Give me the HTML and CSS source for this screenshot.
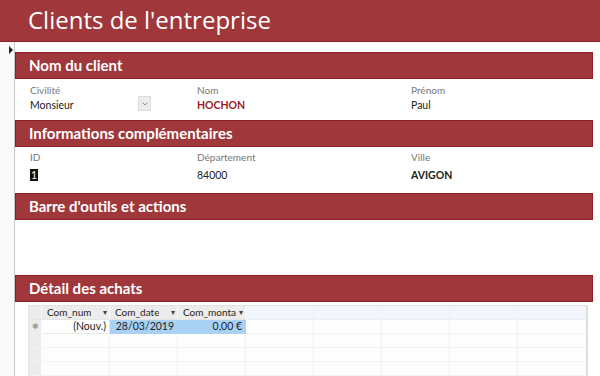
FILE: index.html
```html
<!DOCTYPE html>
<html lang="fr">
<head>
  <meta charset="UTF-8" />
  <title>Clients de l'entreprise</title>
  <link rel="stylesheet" href="styles.css">
</head>
<body>

  <!-- Form header -->
  <div class="title-bar">Clients de l'entreprise</div>

  <div class="main">
    <!-- Record selector -->
    <div class="selector"><span class="current"></span></div>

    <div class="form">
      <div class="section-bar first">Nom du client</div>
      <div class="fields fields-name">
        <div class="field">
          <span class="label">Civilité</span>
          <span class="value">Monsieur</span>
          <span class="combo-btn">
            <svg width="6" height="4" viewBox="0 0 6 4"><path d="M0.5 0.5 L3 3 L5.5 0.5" fill="none" stroke="#8a8a8a" stroke-width="0.9"/></svg>
          </span>
        </div>
        <div class="field">
          <span class="label">Nom</span>
          <span class="value strong red">HOCHON</span>
        </div>
        <div class="field">
          <span class="label">Prénom</span>
          <span class="value">Paul</span>
        </div>
      </div>

      <div class="section-bar">Informations complémentaires</div>
      <div class="fields fields-info">
        <div class="field">
          <span class="label">ID</span>
          <span class="value"><span class="selected">1</span></span>
        </div>
        <div class="field">
          <span class="label">Département</span>
          <span class="value">84000</span>
        </div>
        <div class="field">
          <span class="label">Ville</span>
          <span class="value strong">AVIGON</span>
        </div>
      </div>

      <div class="section-bar">Barre d'outils et actions</div>
      <div class="toolbar-area"></div>

      <div class="section-bar">Détail des achats</div>

      <!-- Sub-datasheet -->
      <div class="datasheet">
        <div class="row head">
          <div class="cell sel"></div>
          <div class="cell col"><span class="clip-text">Com_num</span><span class="arrow">▾</span></div>
          <div class="cell col"><span class="clip-text">Com_date</span><span class="arrow">▾</span></div>
          <div class="cell col"><span class="clip-text">Com_monta</span><span class="arrow">▾</span></div>
          <div class="cell empty"></div>
          <div class="cell empty"></div>
          <div class="cell empty"></div>
          <div class="cell empty"></div>
          <div class="cell empty last"></div>
        </div>
        <div class="row">
          <div class="cell sel star">✱</div>
          <div class="cell num">(Nouv.)</div>
          <div class="cell num hi">28/03/2019</div>
          <div class="cell num hi">0,00 €</div>
          <div class="cell"></div>
          <div class="cell"></div>
          <div class="cell"></div>
          <div class="cell"></div>
          <div class="cell last"></div>
        </div>
        <div class="row">
          <div class="cell sel"></div>
          <div class="cell"></div><div class="cell"></div><div class="cell"></div>
          <div class="cell"></div><div class="cell"></div><div class="cell"></div>
          <div class="cell"></div><div class="cell last"></div>
        </div>
        <div class="row">
          <div class="cell sel"></div>
          <div class="cell"></div><div class="cell"></div><div class="cell"></div>
          <div class="cell"></div><div class="cell"></div><div class="cell"></div>
          <div class="cell"></div><div class="cell last"></div>
        </div>
        <div class="row">
          <div class="cell sel"></div>
          <div class="cell"></div><div class="cell"></div><div class="cell"></div>
          <div class="cell"></div><div class="cell"></div><div class="cell"></div>
          <div class="cell"></div><div class="cell last"></div>
        </div>
      </div>
    </div>
  </div>

</body>
</html>
```

FILE: styles.css
```css
* {
  margin: 0;
  padding: 0;
  box-sizing: border-box;
}

body {
  font-family: Lato, 'Noto Sans', sans-serif;
  width: 600px;
  height: 376px;
  overflow: hidden;
  background: #ffffff;
  color: #222222;
}

.title-bar {
  height: 42px;
  background-color: #a0373a;
  border-bottom: 1px solid #8c2226;
  color: #ffffff;
  font-family: 'Open Sans', 'Noto Sans', sans-serif;
  font-size: 24px;
  line-height: 40px;
  padding-left: 28px;
}

.main {
  display: flex;
  height: 334px;
}

/* Record selector on the left */
.selector {
  width: 15px;
  flex: none;
  background-color: #fafafa;
  border-right: 1px solid #c6c6c6;
  padding-top: 4px;
  padding-left: 9px;
}

.selector .current {
  display: block;
  width: 0;
  height: 0;
  border-top: 4px solid transparent;
  border-bottom: 4px solid transparent;
  border-left: 4px solid #222;
}

.form {
  flex: 1;
  padding: 10px 7px 0 0;
}

.section-bar {
  height: 27px;
  background-color: #a0373a;
  border: 1px solid #8f1e22;
  color: #ffffff;
  font-size: 15px;
  font-weight: 700;
  line-height: 24px;
  padding-left: 13px;
}

.fields {
  display: grid;
  grid-template-columns: 167px 214px 1fr;
  padding-left: 15px;
}

.fields-name {
  height: 41px;
  padding-top: 4px;
}

.fields-info {
  height: 46px;
  padding-top: 3px;
}

.field {
  display: flex;
  flex-direction: column;
  position: relative;
}

.label {
  font-size: 10px;
  color: #777777;
  line-height: 14px;
}

.value {
  font-size: 10.5px;
  line-height: 14px;
  color: #222;
}

.fields-name .value {
  margin-top: 1px;
}

.fields-info .value {
  margin-top: 4px;
}

.value.strong {
  font-weight: 700;
}

.value.red {
  color: #9c1d22;
}

.selected {
  background-color: #111;
  color: #fff;
  padding: 0 1px;
}

.combo-btn {
  position: absolute;
  left: 108px;
  top: 13px;
  width: 13px;
  height: 15px;
  background-color: #ececec;
  border: 1px solid #dcdcdc;
  display: flex;
  align-items: center;
  justify-content: center;
}

.toolbar-area {
  height: 55px;
}

/* Datasheet */
.datasheet {
  margin: 3px 0 0 13px;
  width: 560px;
  border-top: 1px solid #e2e2e2;
  border-right: 2px solid #dedede;
  border-left: 1px solid #e6e6e6;
}

.row {
  display: grid;
  grid-template-columns: 13px 68px 68px 68px 68px 68px 68px 68px 1fr;
  height: 14px;
}

.cell {
  border-right: 1px solid #f2f2f2;
  border-bottom: 1px solid #f2f2f2;
  font-size: 10.5px;
  line-height: 13px;
  white-space: nowrap;
  overflow: hidden;
  background: #fdfdfd;
}

.cell.last {
  border-right: none;
}

.row.head .cell {
  background: #f3f5fc;
  border-color: #eceff7;
}

.row.head .cell.sel,
.row.head .cell.col {
  background: #ececec;
  border-right: 1px solid #f8f8f8;
  border-bottom: 1px solid #e4e4e4;
}

.cell.col {
  color: #222;
  font-size: 10px;
  padding-left: 5px;
  display: flex;
  justify-content: space-between;
  padding-right: 2px;
}

.cell.col .arrow {
  font-size: 8px;
  color: #444;
  flex: none;
  margin-left: 1px;
}

.clip-text {
  overflow: hidden;
}

.cell.sel {
  background: #ececec;
  border-right: 1px solid #fafafa;
}

.cell.star {
  color: #9a9a9a;
  font-size: 8px;
  text-align: center;
}

.cell.num {
  text-align: right;
  padding-right: 3px;
  background: #ffffff;
  border-color: #e8e8e8;
}

.cell.hi {
  background: #a9d1f3;
  border-color: #a9d1f3;
}
```
